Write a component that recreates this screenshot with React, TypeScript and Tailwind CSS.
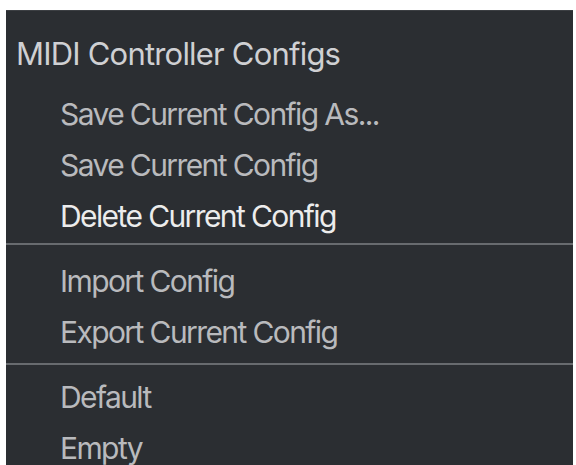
import React from "react";

const groups: { label: string; bright?: boolean }[][] = [
  [
    { label: "Save Current Config As..." },
    { label: "Save Current Config" },
    { label: "Delete Current Config", bright: true },
  ],
  [{ label: "Import Config" }, { label: "Export Current Config" }],
  [{ label: "Default" }, { label: "Empty" }],
];

function MenuItem({ label, bright }: { label: string; bright?: boolean }) {
  return (
    <div
      className={
        "h-[51px] leading-[51px] pl-[54px] text-[30px] tracking-[-1.6px] whitespace-nowrap " +
        (bright ? "text-[#ececec]" : "text-[#b9babd]")
      }
    >
      {label}
    </div>
  );
}

export default function App() {
  return (
    <div
      className="w-[576px] h-[465px] bg-white overflow-hidden pt-[10px] pl-[6px]"
      style={{ fontFamily: "Inter, 'Noto Sans', sans-serif" }}
    >
      <div className="w-[567px] h-[470px] bg-[#2b2e32] border-t border-[#3c3f43] pt-[23px]">
        <div className="h-[40px] leading-[40px] pl-[10px] text-[31px] tracking-[-0.8px] text-[#cfd0d3] whitespace-nowrap">
          MIDI Controller Configs
        </div>

        <div className="mt-[15px] pb-[1px]">
          {groups[0].map((item) => (
            <MenuItem key={item.label} {...item} />
          ))}
        </div>
        <div className="h-[2px] bg-[#686b6f]" />

        <div className="pt-[11px] pb-[5px]">
          {groups[1].map((item) => (
            <MenuItem key={item.label} {...item} />
          ))}
        </div>
        <div className="h-[2px] bg-[#686b6f]" />

        <div className="pt-[7px]">
          {groups[2].map((item) => (
            <MenuItem key={item.label} {...item} />
          ))}
        </div>
      </div>
    </div>
  );
}
